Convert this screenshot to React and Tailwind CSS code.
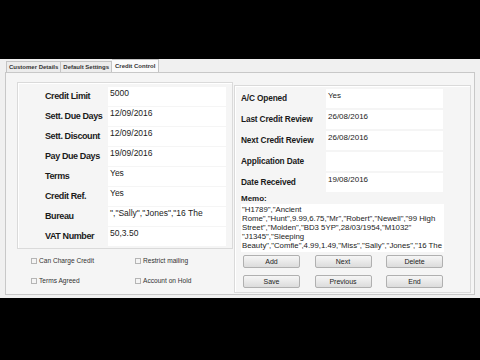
export default function App() {
  const leftRows = [
    ["Credit Limit", "5000"],
    ["Sett. Due Days", "12/09/2016"],
    ["Sett. Discount", "12/09/2016"],
    ["Pay Due Days", "19/09/2016"],
    ["Terms", "Yes"],
    ["Credit Ref.", "Yes"],
    ["Bureau", "\",\"Sally\",\"Jones\",\"16 The"],
    ["VAT Number", "50,3.50"],
  ]
  const rightRows = [
    ["A/C Opened", "Yes"],
    ["Last Credit Review", "26/08/2016"],
    ["Next Credit Review", "26/08/2016"],
    ["Application Date", ""],
    ["Date Received", "19/08/2016"],
  ]
  const memo = [
    "\"H1789\",\"Ancient",
    "Rome\",\"Hunt\",9.99,6.75,\"Mr\",\"Robert\",\"Newell\",\"99 High",
    "Street\",\"Molden\",\"BD3 5YP\",28/03/1954,\"M1032\"",
    "\"J1345\",\"Sleeping",
    "Beauty\",\"Comfie\",4.99,1.49,\"Miss\",\"Sally\",\"Jones\",\"16 The",
  ]

  const Check = ({ label }) => (
    <div className="flex items-center gap-[2px]">
      <span className="w-[6px] h-[6px] border border-[#b5b5b5] bg-[#f4f4f4]" />
      <span>{label}</span>
    </div>
  )

  const Btn = ({ children }) => (
    <div className="w-[57px] h-[13px] flex items-center justify-center border border-[#b0b0b0] rounded-[2px] bg-gradient-to-b from-[#f6f6f6] to-[#dcdcdc] text-[7px] leading-none text-[#222]">
      {children}
    </div>
  )

  return (
    <div className="w-[480px] h-[360px] bg-black flex flex-col font-['Liberation_Sans',Arial,sans-serif] text-[#111]">
      <div className="h-[59px]" />
      <div className="h-[239px] bg-[#f0f0f0] flex flex-col">
        <div className="flex items-end h-[13px] pl-[6px] text-[6px] font-bold text-[#333]">
          <div className="h-[11px] px-[2px] border border-b-0 border-[#c4c4c4] bg-[#ececec] flex items-center">Customer Details</div>
          <div className="h-[11px] px-[2px] border border-b-0 border-l-0 border-[#c4c4c4] bg-[#ececec] flex items-center">Default Settings</div>
          <div className="h-[13px] px-[3px] border border-b-0 border-l-0 border-[#c4c4c4] bg-[#fafafa] flex items-center">Credit Control</div>
        </div>
        <div className="flex-1 mx-[5px] mb-[3px] border border-[#c8c8c8] bg-[#f5f5f5] flex pl-[11px] pt-[9px] pr-[2px] pb-[1px]">
          <div className="w-[216px] flex flex-col">
            <div className="border border-[#dadada] shadow-[inset_1px_1px_0_#fff] pt-[4px] pb-[2px] pr-[6px] flex flex-col gap-[1px]">
              {leftRows.map(([l, v]) => (
                <div key={l} className="flex items-center h-[19px]">
                  <div className="w-[90px] pl-[27px] text-[9px] font-bold tracking-[-0.4px] whitespace-nowrap text-[#1a1a1a]">{l}</div>
                  <div className="w-[118px] h-[19px] bg-white px-[2px] pt-[1px] text-[8.5px] leading-[11px] whitespace-nowrap overflow-hidden text-[#222]">{v}</div>
                </div>
              ))}
            </div>
            <div className="grid grid-cols-[104px_1fr] gap-y-[10px] pl-[14px] pt-[7px] text-[6.6px] text-[#333]">
              <Check label="Can Charge Credit" />
              <Check label="Restrict mailing" />
              <Check label="Terms Agreed" />
              <Check label="Account on Hold" />
            </div>
          </div>
          <div className="ml-[1px] mt-[3px] w-[237px] border border-[#dadada] shadow-[inset_1px_1px_0_#fff] pl-[6px] pt-[3px] flex flex-col">
            <div className="flex flex-col gap-[2px]">
              {rightRows.map(([l, v]) => (
                <div key={l} className="flex items-center h-[19px]">
                  <div className="w-[85px] text-[8.3px] font-bold tracking-[-0.15px] whitespace-nowrap text-[#1a1a1a]">{l}</div>
                  <div className="w-[117px] h-[19px] bg-white px-[2px] pt-[1px] text-[8px] leading-[11px] text-[#222]">{v}</div>
                </div>
              ))}
            </div>
            <div className="text-[8px] font-bold mt-[1px] leading-[11px] text-[#1a1a1a]">Memo:</div>
            <div className="w-[203px] h-[48px] bg-white px-[1px] pt-[1px] text-[7.8px] leading-[9px] overflow-hidden text-[#222]">
              {memo.map((line, i) => (
                <div key={i} className="whitespace-nowrap">{line}</div>
              ))}
            </div>
            <div className="flex justify-between w-[202px] pl-[2px] mt-[3px]">
              <Btn>Add</Btn>
              <Btn>Next</Btn>
              <Btn>Delete</Btn>
            </div>
            <div className="flex justify-between w-[202px] pl-[2px] mt-[7px]">
              <Btn>Save</Btn>
              <Btn>Previous</Btn>
              <Btn>End</Btn>
            </div>
          </div>
        </div>
      </div>
    </div>
  )
}
